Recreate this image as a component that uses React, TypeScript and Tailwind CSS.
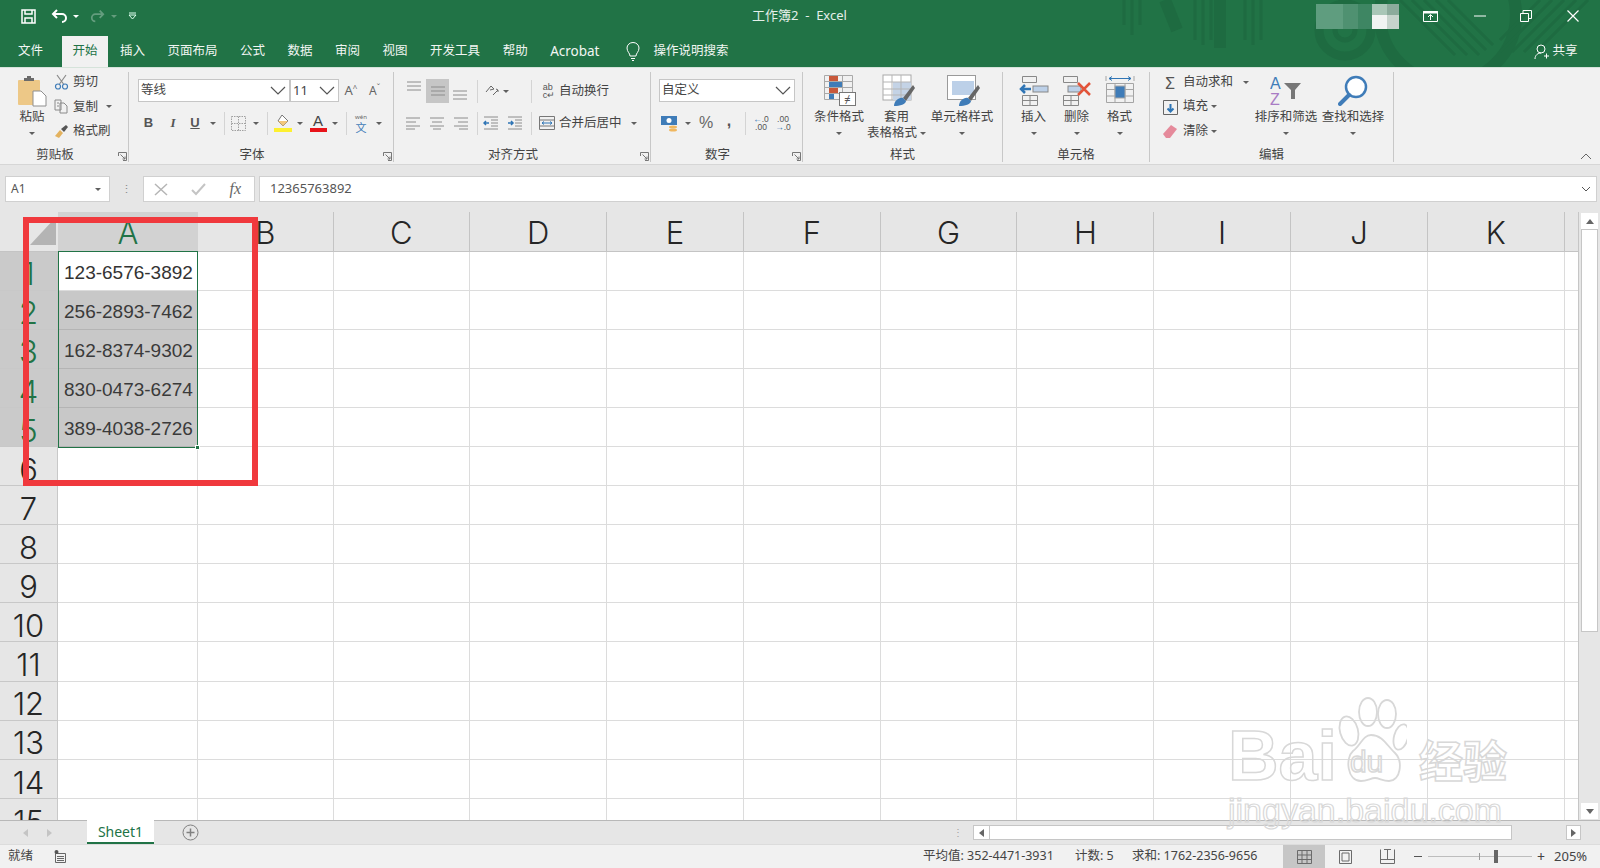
import React from 'react';

const COLS = ['B', 'C', 'D', 'E', 'F', 'G', 'H', 'I', 'J', 'K'];
const ROWS = [1, 2, 3, 4, 5, 6, 7, 8, 9, 10, 11, 12, 13, 14, 15];
const PHONES = ['123-6576-3892', '256-2893-7462', '162-8374-9302', '830-0473-6274', '389-4038-2726'];
const MENU = ['插入', '页面布局', '公式', '数据', '审阅', '视图', '开发工具', '帮助', 'Acrobat'];

const Caret = () => (
  <span className="inline-block w-0 h-0 border-x-[3px] border-x-transparent border-t-[3px] border-t-[#5f5f5f]" />
);

const Sep = () => <span className="block w-px h-[23px] bg-[#d4d4d4]" />;

const Chevron = () => (
  <svg width="16" height="9" viewBox="0 0 16 9" fill="none" stroke="#555" strokeWidth="1.2">
    <path d="M1 1l7 7 7-7" />
  </svg>
);

const Launcher = () => (
  <svg className="absolute right-[1px] bottom-[1px]" width="9" height="9" viewBox="0 0 9 9" fill="none" stroke="#777" strokeWidth="1">
    <path d="M.5 4V.5H8.500V8.500H5M2.500 2.500L7 7M4.500 7H7V4.500" />
  </svg>
);

const Lines = ({ kind }: { kind: 'left' | 'center' | 'right' | 'mid' }) => {
  const d =
    kind === 'left'
      ? 'M1 2h14M1 6h10M1 10h14M1 13h9'
      : kind === 'right'
        ? 'M1 2h14M5 6h10M1 10h14M6 13h9'
        : kind === 'center'
          ? 'M1 2h14M3 6h10M1 10h14M4 13h8'
          : 'M1 3h14M1 7h14M1 11h14';
  return (
    <svg width="16" height="15" viewBox="0 0 16 15" fill="none" stroke="#8c8c8c" strokeWidth="1">
      <path d={d} />
    </svg>
  );
};

const BigButton = ({ icon, lines, caretInline }: { icon: React.ReactNode; lines: string[]; caretInline?: boolean }) => (
  <div className="w-full flex flex-col items-center mt-[2px] text-[12.5px] leading-[16px] text-[#444]">
    <div className="h-[33px] flex items-center justify-center">{icon}</div>
    <div className="mt-[2px] whitespace-nowrap">{lines[0]}</div>
    {lines[1] ? (
      <div className="whitespace-nowrap flex items-center gap-[3px]">
        {lines[1]}
        {caretInline && <Caret />}
      </div>
    ) : (
      <div className="h-[16px] flex items-center">
        <Caret />
      </div>
    )}
  </div>
);

const GridGlyph = ({ children }: { children?: React.ReactNode }) => (
  <svg width="36" height="33" viewBox="0 0 36 33" fill="none">
    {children}
  </svg>
);

const Group = ({ w, label, launcher, children }: { w: string; label: string; launcher?: boolean; children: React.ReactNode }) => (
  <div className={`${w} shrink-0 h-[90px] border-r border-[#c8c8c8] flex flex-col relative`}>
    <div className="flex-1 min-h-0">{children}</div>
    <div className={`h-[14px] text-center text-[12.5px] leading-[14px] text-[#444] ${launcher ? 'pr-[18px]' : ''}`}>{label}</div>
    {launcher && <Launcher />}
  </div>
);

const ComboBox = ({ text, w, textClass }: { text: string; w: string; textClass?: string }) => (
  <div className={`${w} h-[23px] bg-white border border-[#c6c6c6] flex items-center justify-between pl-[2px] pr-[3px] text-[12.5px] text-[#444]`}>
    <span className={textClass}>{text}</span>
    <Chevron />
  </div>
);

const Clipboard = () => (
  <Group w="w-[129px]" label="剪贴板" launcher>
    <div className="flex">
      <div className="ml-[16px] w-[32px] flex flex-col items-center text-[12.5px] leading-[16px] text-[#444]">
        <svg className="mt-[4px]" width="30" height="31" viewBox="0 0 30 31">
          <rect x="1" y="4" width="22" height="25" rx="1" fill="#edc887" />
          <path d="M7 4V2h3V0h4v2h3v3H7z" fill="#6b6b6b" />
          <path d="M16 15h8l5 5v10H16z" fill="#fff" stroke="#8f8f8f" />
        </svg>
        <div className="mt-[2px]">粘贴</div>
        <div className="h-[16px] flex items-center">
          <Caret />
        </div>
      </div>
      <div className="ml-[6px] text-[12.5px] leading-[24px] text-[#444] -mt-[2px]">
        <div className="flex items-center h-[24.500px]">
          <svg width="15" height="16" viewBox="0 0 15 16" fill="none" stroke="#8a8a8a" strokeWidth="1.2">
            <path d="M3 1l6.500 9M12 1L5.500 10" />
            <circle cx="4" cy="12.500" r="2.500" stroke="#3f7cb8" />
            <circle cx="11" cy="12.500" r="2.500" stroke="#3f7cb8" />
          </svg>
          <span className="ml-[4px]">剪切</span>
        </div>
        <div className="flex items-center h-[24.500px]">
          <svg width="15" height="15" viewBox="0 0 15 15" fill="none" stroke="#8a8a8a">
            <path d="M1 1h6v10H1zM6 4h4l3 3v7H6zM3 4h2M3 7h2" />
          </svg>
          <span className="ml-[4px]">复制</span>
          <span className="ml-[8px] flex">
            <Caret />
          </span>
        </div>
        <div className="flex items-center h-[24.500px]">
          <svg width="15" height="14" viewBox="0 0 15 14">
            <path d="M1 12l5-6 3 3-4 5z" fill="#e3b25e" />
            <path d="M7 5l5-4 2 2-4 5z" fill="#555" />
          </svg>
          <span className="ml-[4px]">格式刷</span>
        </div>
      </div>
    </div>
  </Group>
);

const FontGroup = () => (
  <Group w="w-[265px]" label="字体" launcher>
    <div className="flex items-center mt-[7px] ml-[9px]">
      <ComboBox text="等线" w="w-[152px]" />
      <ComboBox text="11" w="w-[49px]" textClass="text-[13px]" />
      <div className="w-[24px] text-center text-[13px] text-[#666]">
        A<sup className="text-[8px]">^</sup>
      </div>
      <div className="w-[23px] text-center text-[12px] text-[#666]">
        A<sup className="text-[8px]">ˇ</sup>
      </div>
    </div>
    <div className="flex items-center h-[24px] mt-[9px] ml-[7px] text-[#555]">
      <span className="w-[25px] text-center text-[13px] font-bold font-['Liberation_Sans',sans-serif]">B</span>
      <span className="w-[24px] text-center text-[13px] italic font-bold font-['Liberation_Serif',serif]">I</span>
      <span className="w-[20px] text-center text-[13px] font-bold underline font-['Liberation_Sans',sans-serif]">U</span>
      <span className="w-[16px] flex justify-center"><Caret /></span>
      <span className="w-[6px] flex justify-center"><Sep /></span>
      <span className="w-[22px] flex justify-center">
        <svg width="15" height="15" viewBox="0 0 15 15" fill="none" stroke="#a0a0a0" strokeDasharray="1.500 1">
          <path d="M.5.500h14v14H.5zM.5 7.500h14M7.500.500v14" />
        </svg>
      </span>
      <span className="w-[14px] flex justify-center"><Caret /></span>
      <span className="w-[8px] flex justify-center"><Sep /></span>
      <span className="w-[24px] flex justify-center">
        <svg width="18" height="18" viewBox="0 0 18 18">
          <path d="M8 1l6 6-5 5-5-5z" fill="#fff" stroke="#777" />
          <path d="M4 7h10l-5 5z" fill="#f3c77b" />
          <rect x="0" y="14" width="18" height="4" fill="#fdf030" />
        </svg>
      </span>
      <span className="w-[10px] flex justify-center"><Caret /></span>
      <span className="w-[26px] flex flex-col items-center">
        <span className="text-[15px] leading-[14px] font-['Liberation_Sans',sans-serif] text-[#444]">A</span>
        <span className="block w-[17px] h-[4px] bg-[#e8131a]" />
      </span>
      <span className="w-[8px] flex justify-center"><Caret /></span>
      <span className="w-[14px] flex justify-center"><Sep /></span>
      <span className="w-[16px] flex flex-col items-center text-[#3f7cb8]">
        <span className="text-[6px] leading-[9px] text-[#666]">wén</span>
        <span className="text-[11px] leading-[12px]">文</span>
      </span>
      <span className="w-[20px] flex justify-center"><Caret /></span>
    </div>
  </Group>
);

const AlignGroup = () => (
  <Group w="w-[257px]" label="对齐方式" launcher>
    <div className="flex items-center h-[24px] mt-[7px] ml-[9px] text-[12.5px] text-[#444]">
      <span className="w-[22px] flex justify-center -mt-[9px]"><Lines kind="mid" /></span>
      <span className="w-[23px] h-[24px] ml-px bg-[#c6c6c6] flex items-center justify-center"><Lines kind="mid" /></span>
      <span className="w-[22px] flex justify-center mt-[8px]"><Lines kind="mid" /></span>
      <span className="w-[12px] flex justify-center"><Sep /></span>
      <span className="w-[18px] flex justify-center">
        <svg width="16" height="14" viewBox="0 0 16 14" fill="none" stroke="#666">
          <path d="M2 8l5-6 3 3-4 1M9 11l5-5M12 5l2 1v2" />
        </svg>
      </span>
      <span className="w-[10px] flex justify-center"><Caret /></span>
      <span className="ml-[20px]"><Sep /></span>
      <span className="ml-[8px] w-[18px] flex justify-center font-['Liberation_Sans',sans-serif] text-[9px] leading-[8px] text-[#555]">
        ab<br />c↵
      </span>
      <span className="ml-[1px]">自动换行</span>
    </div>
    <div className="flex items-center h-[24px] mt-[8px] ml-[8px] text-[12.5px] text-[#444]">
      <span className="w-[22px] flex justify-center"><Lines kind="left" /></span>
      <span className="w-[26px] flex justify-center"><Lines kind="center" /></span>
      <span className="w-[22px] flex justify-center"><Lines kind="right" /></span>
      <span className="w-[10px] flex justify-center"><Sep /></span>
      <span className="w-[18px] flex justify-center">
        <svg width="16" height="14" viewBox="0 0 16 14" fill="none" stroke="#8c8c8c">
          <path d="M1 1h14M8 4h7M8 7h7M8 10h7M1 13h14" />
          <path d="M6 7H1M3 5L1 7l2 2" stroke="#2f75b5" strokeWidth="1.500" />
        </svg>
      </span>
      <span className="w-[30px] flex justify-center">
        <svg width="16" height="14" viewBox="0 0 16 14" fill="none" stroke="#8c8c8c">
          <path d="M1 1h14M8 4h7M8 7h7M8 10h7M1 13h14" />
          <path d="M1 7h5M4 5l2 2-2 2" stroke="#2f75b5" strokeWidth="1.500" />
        </svg>
      </span>
      <span className="w-[2px] flex justify-center"><Sep /></span>
      <span className="ml-[7px] w-[16px] flex justify-center">
        <svg width="16" height="16" viewBox="0 0 16 16" fill="none" stroke="#777">
          <path d="M.5 1.500h15v13H.5zM.5 5h15M.5 11h15" />
          <path d="M3 8h10M5 6.500L3 8l2 1.500M11 6.500L13 8l-2 1.500" stroke="#2f75b5" />
        </svg>
      </span>
      <span className="ml-[4px]">合并后居中</span>
      <span className="ml-[9px] flex"><Caret /></span>
    </div>
  </Group>
);

const NumberGroup = () => (
  <Group w="w-[152px]" label="数字" launcher>
    <div className="mt-[7px] ml-[8px]">
      <ComboBox text="自定义" w="w-[136px]" />
    </div>
    <div className="flex items-center h-[24px] mt-[9px] ml-[8px] text-[#666]">
      <span className="w-[22px] flex justify-center">
        <svg width="18" height="17" viewBox="0 0 18 17">
          <rect x="0" y="1" width="16" height="9" fill="#3f7cb8" />
          <circle cx="8" cy="5.500" r="2.500" fill="#fff" />
          <ellipse cx="12" cy="12" rx="4" ry="1.500" fill="#f0b75f" />
          <ellipse cx="12" cy="15" rx="4" ry="1.500" fill="#f0b75f" />
        </svg>
      </span>
      <span className="w-[14px] flex justify-center"><Caret /></span>
      <span className="w-[22px] text-center text-[16px] font-['Liberation_Sans',sans-serif]">%</span>
      <span className="w-[24px] text-center text-[16px] font-bold text-[#555] font-['Liberation_Sans',sans-serif] -mt-[5px]">,</span>
      <span className="w-[8px] flex justify-center"><Sep /></span>
      <span className="w-[24px] flex flex-col items-center text-[8.5px] leading-[8px] text-[#555] font-['Liberation_Sans',sans-serif]">
        <span><span className="text-[#2f75b5]">←</span>.0</span>
        <span>.00</span>
      </span>
      <span className="w-[20px] flex flex-col items-center text-[8.5px] leading-[8px] text-[#555] font-['Liberation_Sans',sans-serif]">
        <span>.00</span>
        <span><span className="text-[#2f75b5]">→</span>.0</span>
      </span>
    </div>
  </Group>
);

const StylesGroup = () => (
  <Group w="w-[200px]" label="样式">
    <div className="flex">
      <div className="ml-[11px] w-[50px]">
        <BigButton
          lines={['条件格式']}
          icon={
            <GridGlyph>
              <path d="M3.500 1.500h28v24h-28zM3.500 7.500h28M3.500 13.500h28M3.500 19.500h28M12.500 1.500v24M21.500 1.500v24" stroke="#a9a9a9" />
              <rect x="8" y="2" width="9" height="5" fill="#c8593b" />
              <rect x="8" y="8" width="13" height="5" fill="#3f7cb8" />
              <rect x="8" y="14" width="9" height="5" fill="#c8593b" />
              <rect x="8" y="20" width="5" height="5" fill="#3f7cb8" />
              <rect x="18.500" y="18.500" width="16" height="13" fill="#fff" stroke="#777" />
              <text x="26.500" y="29" fontSize="11" textAnchor="middle" fill="#555">≠</text>
            </GridGlyph>
          }
        />
      </div>
      <div className="ml-[4px] w-[57px]">
        <BigButton
          lines={['套用', '表格格式']}
          caretInline
          icon={
            <GridGlyph>
              <rect x="4" y="1" width="28" height="25" fill="#fff" stroke="#a9a9a9" />
              <rect x="14" y="8" width="18" height="18" fill="#c4d3e6" />
              <path d="M4 8h28M4 15h28M4 21h28M13 1v25M22 1v25" stroke="#b5b5b5" />
              <path d="M34 11L24 24l3 3 9-13z" fill="#666" />
              <path d="M15 32c0-5 5-9 9-8l3 3c0 3-6 5-12 5z" fill="#3f7cb8" />
            </GridGlyph>
          }
        />
      </div>
      <div className="ml-[6px] w-[62px]">
        <BigButton
          lines={['单元格样式']}
          icon={
            <GridGlyph>
              <rect x="3.500" y="1.500" width="28" height="24" fill="#fff" stroke="#9a9a9a" />
              <rect x="8" y="7" width="22" height="14" fill="#bcd0e8" />
              <path d="M34 11L24 24l3 3 9-13z" fill="#666" />
              <path d="M15 32c0-5 5-9 9-8l3 3c0 3-6 5-12 5z" fill="#3f7cb8" />
            </GridGlyph>
          }
        />
      </div>
    </div>
  </Group>
);

const CellsGroup = () => (
  <Group w="w-[147px]" label="单元格">
    <div className="flex ml-[9px]">
      <div className="w-[43px]">
        <BigButton
          lines={['插入']}
          icon={
            <svg width="30" height="31" viewBox="0 0 30 31" fill="none" stroke="#888">
              <path d="M3.500 1.500h14v6h-14zM3.500 20.500h15v10h-15zM11 20.500v10M3.500 25.500h15" />
              <rect x="14" y="11" width="15" height="6" fill="#bcd0e8" />
              <path d="M12 14H2M6 10l-4 4 4 4" stroke="#2f75b5" strokeWidth="2.500" />
            </svg>
          }
        />
      </div>
      <div className="w-[43px]">
        <BigButton
          lines={['删除']}
          icon={
            <svg width="30" height="31" viewBox="0 0 30 31" fill="none" stroke="#888">
              <path d="M1.500 1.500h14v6h-14zM1.500 20.500h15v10h-15zM9 20.500v10M1.500 25.500h15" />
              <rect x="6" y="11" width="13" height="6" fill="#bcd0e8" />
              <path d="M16 8l12 12M28 8L16 20" stroke="#e2543a" strokeWidth="2.500" />
            </svg>
          }
        />
      </div>
      <div className="w-[43px]">
        <BigButton
          lines={['格式']}
          icon={
            <svg width="30" height="32" viewBox="0 0 30 32" fill="none" stroke="#a5a5a5">
              <path d="M1 1v5M29 1v5" />
              <path d="M4 3.500h22M7 1.500l-3 2 3 2M23 1.500l3 2-3 2" stroke="#2f75b5" />
              <path d="M1.500 8.500h27v19h-27zM10 8.500v19M20 8.500v19M1.500 14.500h27M1.500 21h27" />
              <rect x="10" y="11" width="10" height="12" fill="#3f7cb8" />
            </svg>
          }
        />
      </div>
    </div>
  </Group>
);

const EditGroup = () => (
  <Group w="w-[244px]" label="编辑">
    <div className="flex">
      <div className="ml-[10px] w-[95px] -mt-[2px] text-[12.5px] text-[#444]">
        <div className="flex items-center h-[24.500px]">
          <span className="w-[20px] text-center text-[17px] leading-none text-[#555]">Σ</span>
          <span className="ml-[3px] w-[52px] whitespace-nowrap">自动求和</span>
          <span className="ml-[8px] flex"><Caret /></span>
        </div>
        <div className="flex items-center h-[24.500px]">
          <span className="w-[20px] flex justify-center">
            <svg width="15" height="16" viewBox="0 0 15 16" fill="none" stroke="#666">
              <path d="M.5 1.500h14v14H.5z" />
              <path d="M7.500 5v8M4.500 9.500l3 3 3-3" stroke="#2f75b5" strokeWidth="2" />
            </svg>
          </span>
          <span className="ml-[3px]">填充</span>
          <span className="ml-[3px] flex"><Caret /></span>
        </div>
        <div className="flex items-center h-[24.500px]">
          <span className="w-[20px] flex justify-center">
            <svg width="14" height="13" viewBox="0 0 14 13">
              <path d="M0 9l8-9 6 4-7 9H3z" fill="#e58a9b" />
            </svg>
          </span>
          <span className="ml-[3px]">清除</span>
          <span className="ml-[3px] flex"><Caret /></span>
        </div>
      </div>
      <div className="w-[62px]">
        <BigButton
          lines={['排序和筛选']}
          icon={
            <svg width="32" height="31" viewBox="0 0 32 31" fontFamily="Liberation Sans" fontSize="16">
              <text x="0" y="14" fill="#3f7cb8">A</text>
              <text x="0" y="30" fill="#a97cc4">Z</text>
              <path d="M14 8h17l-6 7v9h-4v-9z" fill="#777" />
            </svg>
          }
        />
      </div>
      <div className="ml-[5px] w-[62px]">
        <BigButton
          lines={['查找和选择']}
          icon={
            <svg width="30" height="31" viewBox="0 0 30 31" fill="none">
              <circle cx="18" cy="12" r="10" stroke="#3f7cb8" strokeWidth="2.500" fill="#fff" />
              <path d="M11 20L2 29" stroke="#3f7cb8" strokeWidth="4" strokeLinecap="round" />
            </svg>
          }
        />
      </div>
    </div>
  </Group>
);

const TitleDecor = () => (
  <svg className="absolute top-0 right-0" width="500" height="67" viewBox="1100 0 500 67" fill="none" stroke="#1e6b41">
    <path strokeWidth="3" d="M1124 0v25M1132 0v35M1140 0v25M1195 0v40M1203 0v45M1211 0v40M1219 0v45M1245 0v40M1253 0v45M1261 0v40" />
    <path strokeWidth="12" d="M1165 0l12 30M1220 0v48" />
    <circle cx="1345" cy="30" r="26" strokeWidth="9" />
    <circle cx="1345" cy="30" r="10" strokeWidth="5" />
    <circle cx="1448" cy="15" r="68" strokeWidth="12" />
    <path strokeWidth="3" d="M1400 0l55 55M1412 0l55 55M1424 0l55 55M1436 0l50 50M1448 0l45 45M1540 0l-40 40M1552 0l-52 52M1564 0l-52 52M1576 0l-52 52M1588 0l-52 52" />
  </svg>
);

const Watermark = () => (
  <div className="absolute left-[1228px] top-[697px] w-[290px] h-[150px] pointer-events-none select-none text-transparent font-['Liberation_Sans',sans-serif] [-webkit-text-stroke:1.500px_#d8d8d8]">
    <div className="flex items-end h-[92px]">
      <span className="text-[70px] leading-[66px] font-bold">Bai</span>
      <span className="relative w-[72px] h-[92px] shrink-0 -ml-[2px]">
        <svg className="absolute inset-0" width="72" height="92" viewBox="0 0 72 92" fill="none" stroke="#d8d8d8" strokeWidth="1.800">
          <ellipse cx="14" cy="34" rx="9" ry="15" transform="rotate(-15 14 34)" />
          <ellipse cx="33" cy="15" rx="9" ry="14" />
          <ellipse cx="52" cy="17" rx="9" ry="14" />
          <ellipse cx="66" cy="40" rx="7" ry="13" transform="rotate(15 66 40)" />
          <path d="M36 38c-8 0-10 10-18 16-8 7-6 30 8 30 6 0 10-3 14-3s8 3 14 3c12 0 14-20 6-28-8-7-12-18-24-18z" />
        </svg>
        <span className="absolute left-[15px] top-[50px] text-[30px] leading-[30px]">du</span>
      </span>
      <span className="ml-[12px] text-[44px] leading-[60px] font-['Noto_Sans_CJK_SC',sans-serif] font-bold whitespace-nowrap">经验</span>
    </div>
    <div className="text-[34px] leading-[42px] whitespace-nowrap [-webkit-text-stroke:1.200px_#d8d8d8]">jingyan.baidu.com</div>
  </div>
);

const App: React.FC = () => {
  return (
    <div className="relative w-[1600px] h-[868px] overflow-hidden flex flex-col bg-white font-['Noto_Sans','Noto_Sans_CJK_SC',sans-serif]">
      {/* Title bar and menu */}
      <div className="relative h-[67px] bg-[#217346] text-white shrink-0">
        <TitleDecor />
        <div className="relative flex items-center h-[32px] text-[#e4efe9]">
          <svg className="ml-[21px]" width="15" height="15" viewBox="0 0 15 15" fill="none" stroke="#fff" strokeWidth="1.500">
            <path d="M1 1h13v13H1zM4 1v4h7V1M4 14V9h7v5" />
          </svg>
          <svg className="ml-[15px]" width="17" height="14" viewBox="0 0 17 14" fill="none" stroke="#fff" strokeWidth="2">
            <path d="M6 1L2 5l4 4M2 5h9a4 4 0 010 8" />
          </svg>
          <span className="ml-[5px] flex [&>span]:border-t-white"><Caret /></span>
          <svg className="ml-[11px] opacity-30" width="15" height="14" viewBox="0 0 17 14" fill="none" stroke="#fff" strokeWidth="2">
            <path d="M11 1l4 4-4 4M15 5H6a4 4 0 000 8" />
          </svg>
          <span className="ml-[6px] opacity-30 flex [&>span]:border-t-white"><Caret /></span>
          <svg className="ml-[11px]" width="9" height="8" viewBox="0 0 9 8" fill="none" stroke="#dfe">
            <path d="M1 1h7M1 3l3.500 4L8 3z" />
          </svg>
          <span className="ml-[615px] text-[13px] whitespace-nowrap">工作簿2&nbsp; -&nbsp; Excel</span>
          <div className="ml-[469px] flex h-[25px] w-[83px]">
            <span className="w-[27px] bg-[#5f9d7f]" />
            <span className="w-[15px] bg-[#4f9171]" />
            <span className="w-[14px] bg-[#3e8663]" />
            <span className="w-[15px] flex flex-col">
              <span className="h-[11px] bg-[#a9c6b7]" />
              <span className="flex-1 bg-[#f1f3f2]" />
            </span>
            <span className="w-[12px] flex flex-col">
              <span className="h-[11px] bg-[#8cab9c]" />
              <span className="flex-1 bg-[#c6d3cc]" />
            </span>
          </div>
          <svg className="ml-[24px]" width="15" height="12" viewBox="0 0 15 12" fill="none" stroke="#fff">
            <path d="M.5 1.500h14v10H.5z" />
            <path d="M.5 1.500h14v1.500H.5z" fill="#fff" />
            <path d="M7.500 10V5M5 7l2.500-2.500L10 7" />
          </svg>
          <svg className="ml-[36px]" width="12" height="2" viewBox="0 0 12 2" stroke="#fff"><path d="M0 1h12" /></svg>
          <svg className="ml-[34px]" width="12" height="12" viewBox="0 0 12 12" fill="none" stroke="#fff">
            <path d="M.5 3.500h8v8h-8zM3 3.500V.5h8.500v8H8.500" />
          </svg>
          <svg className="ml-[35px]" width="12" height="12" viewBox="0 0 12 12" fill="none" stroke="#fff" strokeWidth="1.200">
            <path d="M.5.500l11 11M11.500.500l-11 11" />
          </svg>
        </div>
        <div className="relative flex items-end h-[35px] text-[12.5px] text-[#f1f6f3]">
          <div className="flex items-center h-[31px] ml-[18px] mr-[19px]">文件</div>
          <div className="flex items-center justify-center h-[31px] w-[46px] bg-[#f1f1f1] text-[#217346] mr-[12px]">开始</div>
          <div className="flex items-center h-[31px] gap-[22.500px]">
            {MENU.map(item => (
              <span key={item} className={item === 'Acrobat' ? 'text-[13.5px]' : ''}>{item}</span>
            ))}
          </div>
          <svg className="ml-[27px] mb-[6px]" width="14" height="19" viewBox="0 0 14 19" fill="none" stroke="#fff">
            <path d="M4 14c0-3-3-4-3-8a6 5.500 0 0112 0c0 4-3 5-3 8zM5 16.500h4M6 18.500h2" />
          </svg>
          <div className="flex items-center h-[31px] ml-[13px]">操作说明搜索</div>
          <svg className="ml-[805px] mb-[7px]" width="15" height="16" viewBox="0 0 15 16" fill="none" stroke="#fff">
            <circle cx="7" cy="5" r="4" />
            <path d="M1 15c0-4 3-6 6-6M10 12h5M12.500 9.500v5" />
          </svg>
          <div className="flex items-center h-[31px] ml-[4px]">共享</div>
        </div>
      </div>

      {/* Ribbon */}
      <div className="relative h-[97px] shrink-0 bg-[#f1f1f1] flex pt-[4px] border-t border-[#d5e3da]">
        <Clipboard />
        <FontGroup />
        <AlignGroup />
        <NumberGroup />
        <StylesGroup />
        <CellsGroup />
        <EditGroup />
        <svg className="ml-auto mr-[8px] mt-[81px]" width="12" height="7" viewBox="0 0 12 7" fill="none" stroke="#666">
          <path d="M1 6l5-5 5 5" />
        </svg>
      </div>

      {/* Formula bar */}
      <div className="h-[48px] shrink-0 bg-[#e6e6e6] border-t border-[#d6d6d6] flex items-start pt-[11px]">
        <div className="ml-[5px] w-[105px] h-[26px] bg-white border border-[#d0d0d0] flex items-center justify-between pl-[5px] pr-[8px] text-[12px] text-[#555]">
          A1
          <Caret />
        </div>
        <div className="w-[33px] h-[26px] flex justify-center items-center text-[#888] text-[11px] leading-[6px]">⋮</div>
        <div className="w-[112px] h-[26px] bg-white border border-[#d0d0d0] flex items-center justify-between pl-[10px] pr-[13px]">
          <svg width="14" height="13" viewBox="0 0 14 13" stroke="#b5b5b5" strokeWidth="1.500"><path d="M1 1l12 11M13 1L1 12" /></svg>
          <svg width="15" height="13" viewBox="0 0 15 13" fill="none" stroke="#c4c4c4" strokeWidth="2"><path d="M1 7l4 4 9-10" /></svg>
          <span className="text-[16px] italic text-[#666] font-['Liberation_Serif',serif]">fx</span>
        </div>
        <div className="ml-[4px] mr-[3px] flex-1 h-[26px] bg-white border border-[#d0d0d0] flex items-center justify-between pl-[10px] pr-[5px] text-[13px] text-[#555]">
          12365763892
          <svg width="10" height="6" viewBox="0 0 10 6" fill="none" stroke="#555"><path d="M1 1l4 4 4-4" /></svg>
        </div>
      </div>

      {/* Sheet grid */}
      <div className="flex-1 min-h-0 flex overflow-hidden">
        <div className="flex-1 min-w-0 overflow-hidden">
          <div className="grid grid-cols-[58px_140px_135.500px_repeat(8,136.800px)_137px_14px] grid-rows-[39.500px] auto-rows-[39.100px] font-['Liberation_Sans',sans-serif]">
            <div className="bg-[#e6e6e6] border-b border-[#c4c4c4] relative">
              <svg className="absolute left-[30px] top-[5px]" width="26" height="28" viewBox="0 0 26 28"><path d="M26 0v28H0z" fill="#b4b4b4" /></svg>
            </div>
            <div className="bg-[#d2d2d2] border-b border-[#c4c4c4] flex items-center justify-center pt-[4px] text-[31px] font-light font-['Inter',sans-serif] text-[#217346]">A</div>
            {COLS.map(c => (
              <div key={c} className="bg-[#e6e6e6] border-b border-r border-[#c4c4c4] flex items-center justify-center pt-[4px] text-[31px] font-light font-['Inter',sans-serif] text-[#262626]">{c}</div>
            ))}
            <div className="bg-[#e6e6e6] border-b border-[#c4c4c4]" />
            {ROWS.map(r => {
              const picked = r <= 5;
              return (
                <React.Fragment key={r}>
                  <div className={`border-b border-r border-[#c8c8c8] flex items-center justify-center pt-[8px] text-[31px] font-light font-['Inter',sans-serif] ${picked ? 'bg-[#cacaca] text-[#217346]' : 'bg-[#e6e6e6] text-[#262626]'}`}>{r}</div>
                  <div className={`flex items-center pl-[6px] pt-[5px] text-[19px] whitespace-nowrap border-b ${picked && r > 1 ? 'bg-[#c8c8c8] border-[#b4b4b4] text-[#3a3a3a]' : 'border-[#dcdcdc] border-r text-[#333]'}`}>
                    {PHONES[r - 1]}
                  </div>
                  {COLS.map(c => (
                    <div key={c} className="border-b border-r border-[#dcdcdc]" />
                  ))}
                  <div className="border-b border-[#dcdcdc]" />
                </React.Fragment>
              );
            })}
          </div>
        </div>
        {/* Vertical scrollbar */}
        <div className="w-[22px] shrink-0 bg-[#e6e6e6] border-l border-[#c6c6c6] flex flex-col items-center">
          <div className="h-[16px] w-[17px] mt-[1px] bg-white flex items-center justify-center">
            <svg width="8" height="5" viewBox="0 0 8 5"><path d="M4 0l4 5H0z" fill="#666" /></svg>
          </div>
          <div className="h-[403px] w-[17px] bg-white border border-[#c6c6c6]" />
          <div className="flex-1" />
          <div className="h-[16px] w-[17px] mb-[1px] bg-white flex items-center justify-center">
            <svg width="8" height="5" viewBox="0 0 8 5"><path d="M4 5l4-5H0z" fill="#666" /></svg>
          </div>
        </div>
      </div>

      {/* Sheet tabs */}
      <div className="h-[24px] shrink-0 bg-[#e6e6e6] border-t border-[#b8b8b8] flex items-center font-['Liberation_Sans',sans-serif]">
        <svg className="ml-[23px]" width="5" height="8" viewBox="0 0 5 8"><path d="M5 0v8L0 4z" fill="#c4c4c4" /></svg>
        <svg className="ml-[19px]" width="5" height="8" viewBox="0 0 5 8"><path d="M0 0v8l5-4z" fill="#c4c4c4" /></svg>
        <div className="ml-[35px] w-[67px] h-[24px] -mt-px bg-white border-b-2 border-[#217346] flex items-center justify-center text-[14px] text-[#217346] font-['Noto_Sans',sans-serif]">Sheet1</div>
        <svg className="ml-[28px]" width="17" height="17" viewBox="0 0 17 17" fill="none" stroke="#808080">
          <circle cx="8.500" cy="8.500" r="7.500" />
          <path d="M4.500 8.500h8M8.500 4.500v8" strokeWidth="1.500" />
        </svg>
        <span className="ml-[754px] text-[#a0a0a0] text-[10px] leading-none">⋮</span>
        <div className="ml-[10px] w-[17px] h-[15px] bg-white border border-[#c6c6c6] flex items-center justify-center">
          <svg width="5" height="8" viewBox="0 0 5 8"><path d="M5 0v8L0 4z" fill="#666" /></svg>
        </div>
        <div className="w-[522px] h-[15px] bg-white border-y border-r border-[#c6c6c6]" />
        <div className="w-[54px]" />
        <div className="w-[15px] h-[15px] bg-white border border-[#c6c6c6] flex items-center justify-center">
          <svg width="5" height="8" viewBox="0 0 5 8"><path d="M0 0v8l5-4z" fill="#666" /></svg>
        </div>
      </div>

      {/* Status bar */}
      <div className="h-[24px] shrink-0 bg-[#f1f1f1] flex items-center text-[12.5px] text-[#444] border-t border-[#dcdcdc]">
        <span className="ml-[8px]">就绪</span>
        <svg className="ml-[21px]" width="13" height="13" viewBox="0 0 13 13" fill="none" stroke="#666">
          <path d="M1.500 3.500h10v9h-10zM3 6.500h7M3 8.500h7M3 10.500h7" />
          <circle cx="2.500" cy="2" r="2" fill="#555" stroke="none" />
        </svg>
        <span className="ml-[856px] w-[152px] whitespace-nowrap">平均值: 352-4471-3931</span>
        <span className="w-[57px] whitespace-nowrap">计数: 5</span>
        <span className="w-[151px] whitespace-nowrap">求和: 1762-2356-9656</span>
        <div className="w-[42px] h-[23px] bg-[#c6c6c6] flex items-center justify-center">
          <svg width="15" height="14" viewBox="0 0 15 14" fill="none" stroke="#6b6b6b">
            <path d="M.5.500h14v13H.5zM.5 5h14M.5 9.500h14M5 .5v13M10 .5v13" />
          </svg>
        </div>
        <div className="w-[40px] flex justify-center">
          <svg width="13" height="14" viewBox="0 0 13 14" fill="none" stroke="#6b6b6b">
            <path d="M.5.500h12v13H.5zM3 3h7v8H3z" />
          </svg>
        </div>
        <div className="w-[44px] flex justify-center">
          <svg width="15" height="15" viewBox="0 0 15 15" fill="none" stroke="#6b6b6b">
            <path d="M.5 14.500V.5M14.500 14.500V.5M.5 14.500h14M.5 10.500h14M7.500.5v10M4 .5h7" />
          </svg>
        </div>
        <span className="ml-[5px] w-[8px] h-px bg-[#555]" />
        <div className="relative ml-[6px] w-[104px] h-px bg-[#bdbdbd]">
          <span className="absolute left-[51px] -top-[3px] w-px h-[7px] bg-[#999]" />
          <span className="absolute left-[66px] -top-[6px] w-[4px] h-[13px] bg-[#666]" />
        </div>
        <span className="ml-[5px] text-[14px] leading-none">+</span>
        <span className="ml-[9px] text-[13px]">205%</span>
      </div>

      {/* Selection outline and fill handle */}
      <div className="absolute left-[58px] top-[251px] w-[140px] h-[197px] border-[1.500px] border-[#217346]" />
      <div className="absolute left-[195px] top-[445px] w-[5px] h-[5px] bg-[#217346] border border-white" />

      {/* Red annotation */}
      <div className="absolute left-[23px] top-[217px] w-[235px] h-[269px] border-[6px] border-[#f0393d]" />

      <Watermark />
    </div>
  );
};

export default App;
